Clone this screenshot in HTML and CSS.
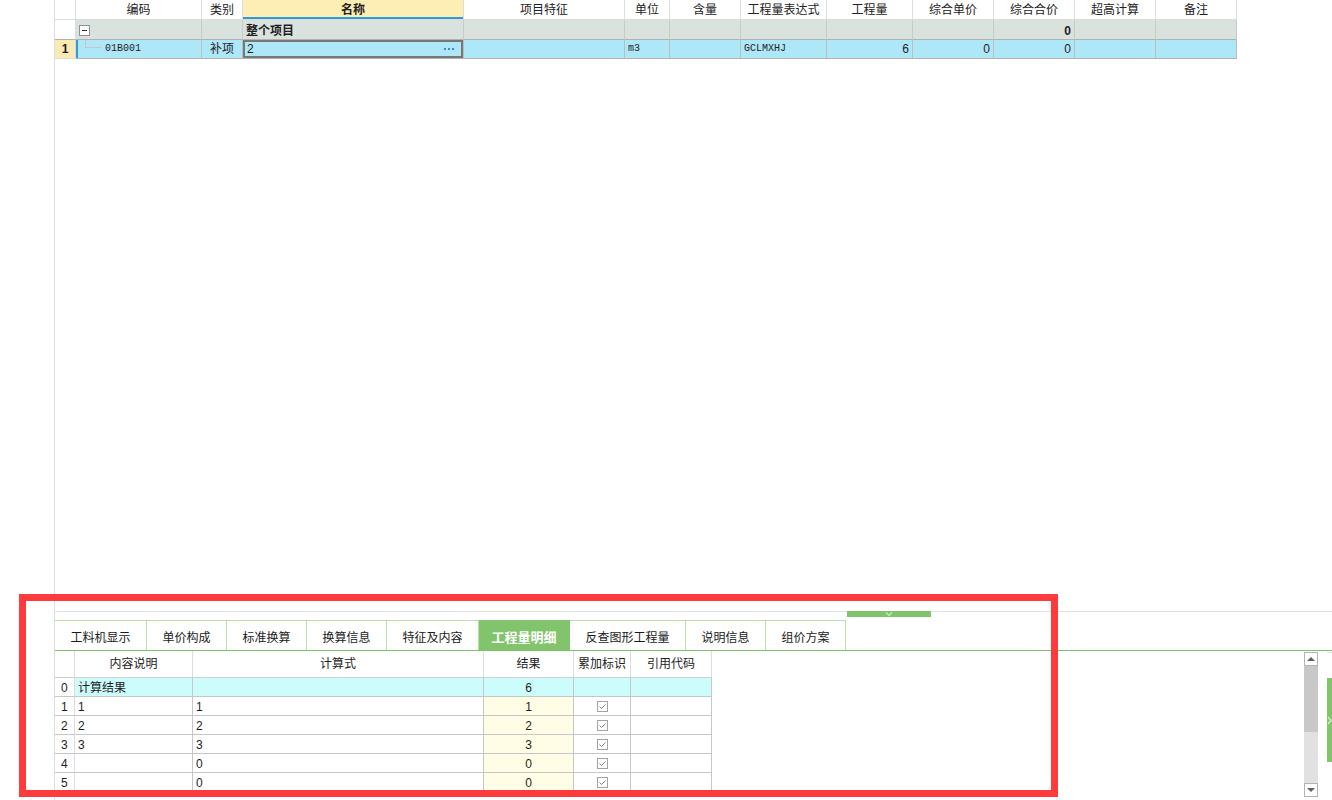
FILE: index.html
```html
<!DOCTYPE html>
<html lang="zh-CN">
<head>
<meta charset="utf-8">
<title>工程量明细</title>
<link rel="stylesheet" href="styles.css">
</head>
<body>
<div class="page">
  <div class="gutter"></div>
  <div class="main">
    <div class="top">
      <table class="grid">
        <colgroup>
          <col class="c-rn"><col class="c-code"><col class="c-type"><col class="c-name"><col class="c-feat"><col class="c-unit"><col class="c-qty"><col class="c-expr"><col class="c-amt"><col class="c-w81"><col class="c-w81"><col class="c-w81"><col class="c-w81">
        </colgroup>
        <thead>
          <tr>
            <th class="rn"></th><th>编码</th><th>类别</th><th class="cur">名称</th><th>项目特征</th><th>单位</th><th>含量</th><th>工程量表达式</th><th>工程量</th><th>综合单价</th><th>综合合价</th><th>超高计算</th><th>备注</th>
          </tr>
        </thead>
        <tbody>
          <tr class="grp">
            <td class="rn"></td>
            <td class="code"><span class="minus"></span></td>
            <td></td>
            <td class="b">整个项目</td>
            <td></td><td></td><td></td><td></td><td></td><td></td>
            <td class="num b">0</td>
            <td></td><td></td>
          </tr>
          <tr class="sel">
            <td class="rn">1</td>
            <td class="code mark"><div class="treecell"><span class="tree"></span><span class="mono">01B001</span></div></td>
            <td class="ctr">补项</td>
            <td class="edit"><div class="editcell"><span>2</span><span class="dots"></span></div></td>
            <td></td>
            <td class="mono">m3</td>
            <td></td>
            <td class="mono">GCLMXHJ</td>
            <td class="num">6</td>
            <td class="num">0</td>
            <td class="num">0</td>
            <td></td><td></td>
          </tr>
        </tbody>
      </table>
    </div>

    <div class="splitter">
      <div class="handle">
        <svg width="8" height="5" viewBox="0 0 8 5"><path d="M1 0.5 L4 3.5 L7 0.5" fill="none" stroke="#c9ebbd" stroke-width="1.2"/></svg>
      </div>
    </div>

    <div class="tabs">
      <div class="tab t92">工料机显示</div>
      <div class="tab t80">单价构成</div>
      <div class="tab t80">标准换算</div>
      <div class="tab t80">换算信息</div>
      <div class="tab t92">特征及内容</div>
      <div class="tab t91 active">工程量明细</div>
      <div class="tab t116">反查图形工程量</div>
      <div class="tab t80">说明信息</div>
      <div class="tab t80">组价方案</div>
    </div>

    <div class="bottom">
      <table class="grid2">
        <colgroup>
          <col class="d-rn"><col class="d-desc"><col class="d-expr"><col class="d-res"><col class="d-acc"><col class="d-ref">
        </colgroup>
        <thead>
          <tr><th></th><th>内容说明</th><th>计算式</th><th>结果</th><th>累加标识</th><th>引用代码</th></tr>
        </thead>
        <tbody>
          <tr class="r0"><td class="rn2">0</td><td>计算结果</td><td></td><td class="ctr">6</td><td></td><td></td></tr>
          <tr><td class="rn2">1</td><td>1</td><td>1</td><td class="res ctr">1</td><td class="ctr"><svg class="chk" width="11" height="11" viewBox="0 0 11 11"><rect x="0.5" y="0.5" width="10" height="10" fill="#fff" stroke="#a3a3a3"/><path d="M2.5 5.5 L4.5 7.5 L8.5 3.5" fill="none" stroke="#808080"/></svg></td><td></td></tr>
          <tr><td class="rn2">2</td><td>2</td><td>2</td><td class="res ctr">2</td><td class="ctr"><svg class="chk" width="11" height="11" viewBox="0 0 11 11"><rect x="0.5" y="0.5" width="10" height="10" fill="#fff" stroke="#a3a3a3"/><path d="M2.5 5.5 L4.5 7.5 L8.5 3.5" fill="none" stroke="#808080"/></svg></td><td></td></tr>
          <tr><td class="rn2">3</td><td>3</td><td>3</td><td class="res ctr">3</td><td class="ctr"><svg class="chk" width="11" height="11" viewBox="0 0 11 11"><rect x="0.5" y="0.5" width="10" height="10" fill="#fff" stroke="#a3a3a3"/><path d="M2.5 5.5 L4.5 7.5 L8.5 3.5" fill="none" stroke="#808080"/></svg></td><td></td></tr>
          <tr><td class="rn2">4</td><td></td><td>0</td><td class="res ctr">0</td><td class="ctr"><svg class="chk" width="11" height="11" viewBox="0 0 11 11"><rect x="0.5" y="0.5" width="10" height="10" fill="#fff" stroke="#a3a3a3"/><path d="M2.5 5.5 L4.5 7.5 L8.5 3.5" fill="none" stroke="#808080"/></svg></td><td></td></tr>
          <tr><td class="rn2">5</td><td></td><td>0</td><td class="res ctr">0</td><td class="ctr"><svg class="chk" width="11" height="11" viewBox="0 0 11 11"><rect x="0.5" y="0.5" width="10" height="10" fill="#fff" stroke="#a3a3a3"/><path d="M2.5 5.5 L4.5 7.5 L8.5 3.5" fill="none" stroke="#808080"/></svg></td><td></td></tr>
        </tbody>
      </table>
      <div class="fill"></div>
      <div class="vscroll">
        <div class="sb-btn"><span class="tri-up"></span></div>
        <div class="sb-thumb"></div>
        <div class="sb-track"></div>
        <div class="sb-btn"><span class="tri-down"></span></div>
      </div>
      <div class="side">
        <div class="side-line"></div>
        <div class="side-bar">
          <svg width="5" height="9" viewBox="0 0 5 9"><path d="M1 1 L4 4.5 L1 8" fill="none" stroke="#d6f0cc" stroke-width="1.2"/></svg>
        </div>
      </div>
    </div>
  </div>
</div>
<div class="annot"></div>
</body>
</html>
```
FILE: styles.css
```css
html, body {
  margin: 0;
  padding: 0;
}
body {
  width: 1332px;
  height: 800px;
  overflow: hidden;
  position: relative;
  background: #fff;
  color: #1e1e1e;
  font-family: "Liberation Sans", "Noto Sans CJK SC", sans-serif;
  font-size: 12px;
}
.page {
  display: flex;
  height: 800px;
}
.gutter {
  width: 54px;
  flex: none;
}
.main {
  flex: 1;
  min-width: 0;
  border-left: 1px solid #dedede;
  display: flex;
  flex-direction: column;
}
.top {
  height: 611px;
  flex: none;
}

/* top grid */
.grid {
  border-collapse: separate;
  border-spacing: 0;
  table-layout: fixed;
  width: 1182px;
}
.c-rn { width: 21px; }
.c-code { width: 126px; }
.c-type { width: 41px; }
.c-name { width: 221px; }
.c-feat { width: 161px; }
.c-unit { width: 45px; }
.c-qty { width: 71px; }
.c-expr { width: 86px; }
.c-amt { width: 86px; }
.c-w81 { width: 81px; }

.grid th, .grid td {
  padding: 0 3px;
  border-right: 1px solid #dcdcdc;
  border-bottom: 1px solid #dcdcdc;
  white-space: nowrap;
  overflow: hidden;
  line-height: 16px;
}
.grid thead tr { height: 20px; }
.grid th {
  font-weight: normal;
  text-align: center;
  background: #fff;
  color: #222;
}
.grid th.cur {
  background: #fdeeb4;
  font-weight: bold;
  box-shadow: inset 0 -2px 0 #2b9ed8;
}
.grid .rn {
  padding: 0;
  text-align: center;
}
.grp { height: 20px; }
.grp td {
  background: #dae2de;
  border-right-color: #c6ccc9;
  border-bottom-color: #b2b2b2;
  padding-top: 2px;
}
.grp td.rn { background: #fff; border-right-color: #dcdcdc; }
.sel { height: 19px; }
.sel td {
  background: #aee7f8;
  border-right-color: #bdbdbd;
  border-bottom-color: #b2b2b2;
}
.sel td.rn {
  background: #fde9b2;
  font-weight: bold;
  border-right-color: #dcdcdc;
  border-bottom-color: #dcdcdc;
}
.grid td.code { padding: 0; }
.grid td.mark { box-shadow: inset 2px 0 0 #2f9cd6; }
.b { font-weight: bold; }
.num { text-align: right; }
.ctr { text-align: center; }
.mono {
  font-family: "Liberation Mono", "DejaVu Sans Mono", monospace;
  font-size: 10px;
}
.minus {
  display: inline-block;
  vertical-align: middle;
  margin-left: 3px;
  width: 11px;
  height: 11px;
  box-sizing: border-box;
  border: 1px solid #8f8f8f;
  background: #fff linear-gradient(#333, #333) no-repeat center / 5px 1px;
}
.treecell {
  display: flex;
  align-items: flex-start;
  height: 18px;
}
.tree {
  flex: none;
  width: 16px;
  height: 8px;
  margin-left: 9px;
  border-left: 1px solid #c6c6c6;
  border-bottom: 1px solid #c6c6c6;
  box-sizing: border-box;
}
.treecell .mono {
  margin-left: 4px;
  line-height: 18px;
}
.grid td.edit {
  box-shadow: inset 0 0 0 2px #777;
  padding: 0 0 0 4px;
}
.editcell {
  display: flex;
  align-items: center;
  justify-content: space-between;
  height: 18px;
}
.dots {
  width: 2px;
  height: 2px;
  margin-right: 17px;
  background: #3a8bd6;
  box-shadow: 4px 0 0 #3a8bd6, 8px 0 0 #3a8bd6;
}

/* splitter */
.splitter {
  flex: none;
  height: 8px;
  border-top: 1px solid #e0e0e0;
}
.handle {
  margin-top: -1px;
  margin-left: 792px;
  width: 84px;
  height: 6px;
  background: #82c46c;
  display: flex;
  justify-content: center;
}
.handle svg { display: block; margin-top: 1px; }

/* tabs */
.tabs {
  flex: none;
  display: flex;
  height: 31px;
  box-sizing: border-box;
  border-bottom: 1px solid #7cc46a;
}
.tab {
  flex: none;
  box-sizing: border-box;
  height: 30px;
  border-top: 1px solid #b6e4a3;
  border-right: 1px solid #b6e4a3;
  display: flex;
  align-items: center;
  justify-content: center;
  font-size: 12px;
  color: #1a1a1a;
  padding-top: 1px;
}
.t80 { width: 80px; }
.t91 { width: 91px; }
.t92 { width: 92px; }
.t116 { width: 116px; }
.tab.active {
  background: #82c46c;
  border-color: #82c46c;
  color: #fff;
  font-weight: bold;
  font-size: 13px;
}

/* bottom grid */
.bottom {
  flex: 1;
  min-height: 0;
  overflow: hidden;
  display: flex;
  align-items: flex-start;
}
.grid2 {
  flex: none;
  border-collapse: separate;
  border-spacing: 0;
  table-layout: fixed;
  width: 657px;
}
.d-rn { width: 20px; }
.d-desc { width: 118px; }
.d-expr { width: 291px; }
.d-res { width: 90px; }
.d-acc { width: 57px; }
.d-ref { width: 81px; }
.grid2 th, .grid2 td {
  padding: 0 3px;
  white-space: nowrap;
  overflow: hidden;
  line-height: 16px;
  border-right: 1px solid #c6c6c6;
  border-bottom: 1px solid #c6c6c6;
}
.grid2 thead tr { height: 27px; }
.grid2 th {
  font-weight: normal;
  text-align: center;
  color: #222;
  border-right-color: #dcdcdc;
  border-bottom-color: #cfcfcf;
}
.grid2 tbody tr { height: 19px; }
.grid2 td { padding-top: 1px; }
.grid2 td.rn2 {
  padding-left: 6px;
  border-right-color: #dcdcdc;
}
.r0 td { background: #ccfcfc; }
.r0 td.rn2 { background: #fff; }
.res { background: #fffde6; }
.chk { display: block; margin: 0 auto; }

.fill { flex: 1; }
.vscroll {
  flex: none;
  width: 14px;
  height: 145px;
  margin-top: 1px;
  display: flex;
  flex-direction: column;
}
.sb-btn {
  flex: none;
  height: 14px;
  box-sizing: border-box;
  border: 1px solid #b4b4b4;
  background: #fff;
  display: flex;
  align-items: center;
  justify-content: center;
}
.tri-up {
  width: 0;
  height: 0;
  border-left: 4px solid transparent;
  border-right: 4px solid transparent;
  border-bottom: 4px solid #5f5f6a;
}
.tri-down {
  width: 0;
  height: 0;
  border-left: 4px solid transparent;
  border-right: 4px solid transparent;
  border-top: 4px solid #5f5f6a;
}
.sb-thumb {
  flex: none;
  height: 66px;
  background: #c8c8c8;
}
.sb-track {
  flex: 1;
  background: #e1e1e1;
}
.side {
  flex: none;
  width: 5px;
  margin-left: 9px;
}
.side-line {
  height: 1px;
  margin-top: 1px;
  background: #e0e0e0;
}
.side-bar {
  margin-top: 25px;
  height: 84px;
  background: #82c46c;
  display: flex;
  align-items: center;
}
.side-bar svg { display: block; }

/* annotation overlay */
.annot {
  position: absolute;
  left: 19px;
  top: 594px;
  width: 1039px;
  height: 203px;
  box-sizing: border-box;
  border: 7px solid #fd3a3c;
}
```
